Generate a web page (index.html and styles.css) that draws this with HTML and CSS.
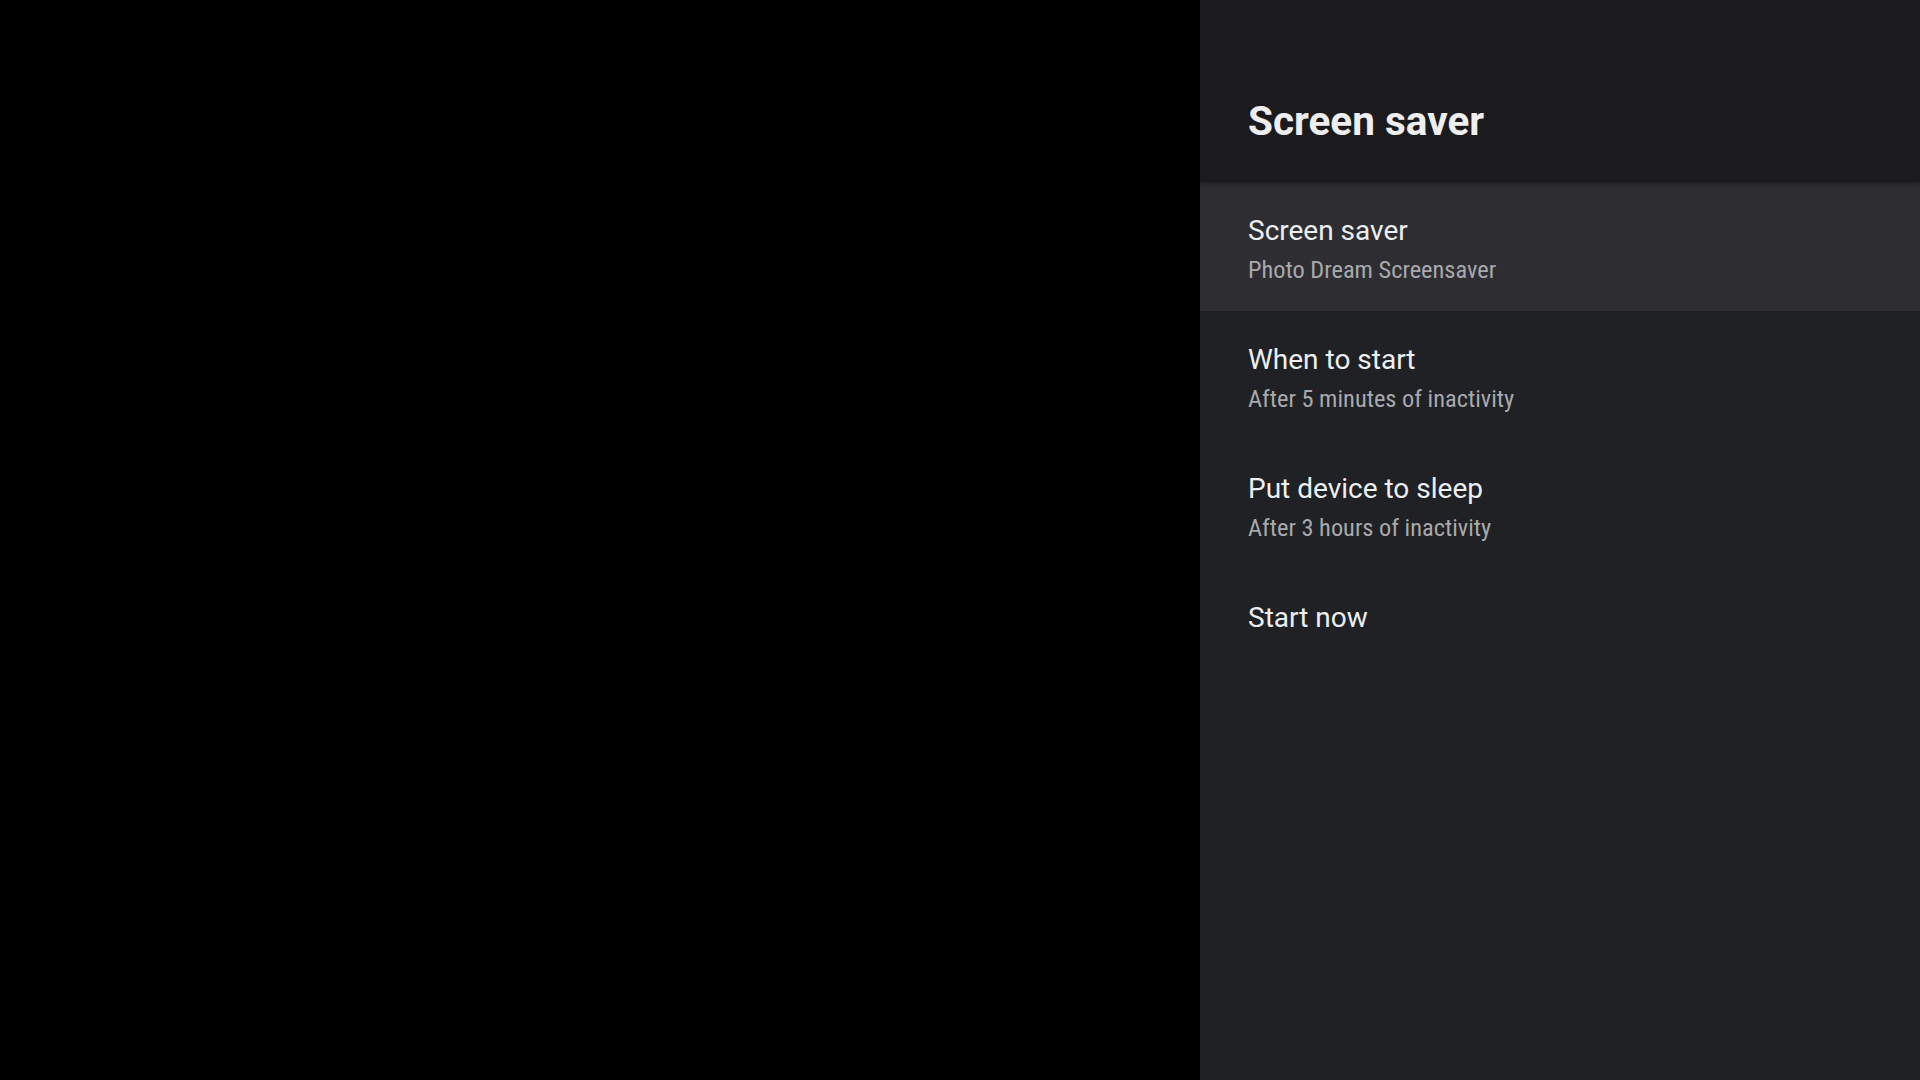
FILE: index.html
```html
<!DOCTYPE html>
<html lang="en">
<head>
<meta charset="utf-8">
<title>Screen saver</title>
<link rel="stylesheet" href="styles.css">
</head>
<body>
<div class="screen">
  <div class="backdrop"></div>
  <aside class="panel">
    <header class="panel-header">
      <h1 class="panel-title">Screen saver</h1>
    </header>
    <ul class="pref-list">
      <li class="pref focused">
        <div class="pref-title">Screen saver</div>
        <div class="pref-summary">Photo Dream Screensaver</div>
      </li>
      <li class="pref">
        <div class="pref-title">When to start</div>
        <div class="pref-summary">After 5 minutes of inactivity</div>
      </li>
      <li class="pref">
        <div class="pref-title">Put device to sleep</div>
        <div class="pref-summary">After 3 hours of inactivity</div>
      </li>
      <li class="pref">
        <div class="pref-title">Start now</div>
      </li>
    </ul>
  </aside>
</div>
</body>
</html>
```
FILE: styles.css
```css
html, body {
  margin: 0;
  padding: 0;
  background: #000;
}
body {
  font-family: Roboto, "Noto Sans", sans-serif;
}
.screen {
  display: flex;
  width: 1920px;
  height: 1080px;
  overflow: hidden;
}
.backdrop {
  flex: 0 0 1200px;
  background: #000;
}
.panel {
  flex: 0 0 720px;
  background: #202124;
  display: flex;
  flex-direction: column;
}
.panel-header {
  height: 182px;
  box-sizing: border-box;
  padding: 101px 48px 0 48px;
  background: #1b1b1d;
  box-shadow: 0 2px 4px rgba(0,0,0,0.35);
  position: relative;
  z-index: 1;
}
.panel-title {
  margin: 0;
  font-size: 40.5px;
  line-height: 40px;
  font-weight: 700;
  color: #eeeeef;
}
.pref-list {
  list-style: none;
  margin: 0;
  padding: 0;
}
.pref {
  height: 129px;
  box-sizing: border-box;
  padding: 31px 48px 0 48px;
}
.pref.focused {
  background: #2e2e32;
}
.pref-title {
  font-size: 28px;
  line-height: 36px;
  color: #eceff1;
}
.pref-summary {
  margin-top: 5px;
  font-family: "Roboto Condensed", Roboto, sans-serif;
  font-stretch: condensed;
  font-size: 24.4px;
  line-height: 32px;
  color: #a8a9ad;
}
```
